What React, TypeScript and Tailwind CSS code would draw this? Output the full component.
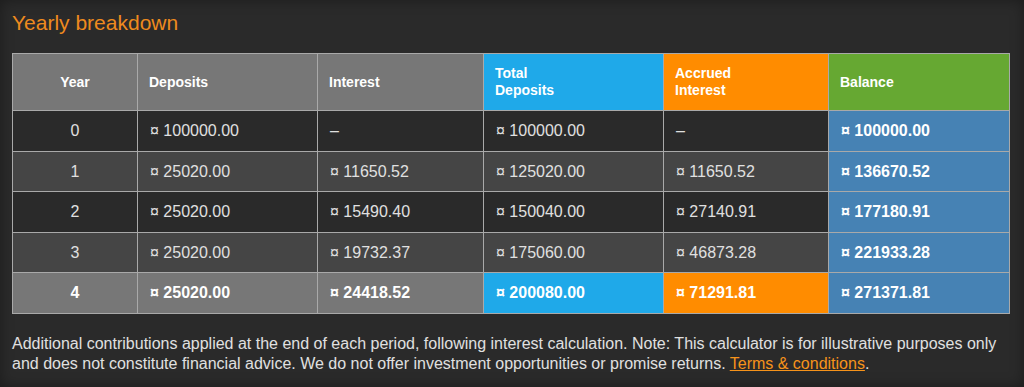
import React from "react";

type Row = {
  year: string;
  dep: string;
  int: string;
  tot: string;
  acc: string;
  bal: string;
};

const rows: Row[] = [
  { year: "0", dep: "¤ 100000.00", int: "–", tot: "¤ 100000.00", acc: "–", bal: "¤ 100000.00" },
  { year: "1", dep: "¤ 25020.00", int: "¤ 11650.52", tot: "¤ 125020.00", acc: "¤ 11650.52", bal: "¤ 136670.52" },
  { year: "2", dep: "¤ 25020.00", int: "¤ 15490.40", tot: "¤ 150040.00", acc: "¤ 27140.91", bal: "¤ 177180.91" },
  { year: "3", dep: "¤ 25020.00", int: "¤ 19732.37", tot: "¤ 175060.00", acc: "¤ 46873.28", bal: "¤ 221933.28" },
];

const last: Row = {
  year: "4",
  dep: "¤ 25020.00",
  int: "¤ 24418.52",
  tot: "¤ 200080.00",
  acc: "¤ 71291.81",
  bal: "¤ 271371.81",
};

const cellA = "border border-[#a9a9a9] px-[12px] h-[41px] align-middle";
const cellB = "border border-[#a9a9a9] px-[12px] h-[40px] align-middle";

export default function App() {
  return (
    <div
      className="min-h-[387px] w-[1024px] bg-[#2a2a2a] px-[12px] pt-[10px] pb-[10px] text-[#e0e0e0] shadow-[inset_0_0_14px_rgba(0,0,0,0.35)]"
      style={{ fontFamily: '"Liberation Sans", Arial, sans-serif' }}
    >
      <h2 className="text-[21px] leading-[25px] text-[#ee8a1e]">Yearly breakdown</h2>
      <table className="mt-[18px] w-[997px] table-fixed border-collapse border border-[#a9a9a9] text-[16px] leading-[18px]">
        <colgroup>
          <col className="w-[125px]" />
          <col className="w-[180px]" />
          <col className="w-[166px]" />
          <col className="w-[180px]" />
          <col className="w-[165px]" />
          <col className="w-[181px]" />
        </colgroup>
        <thead>
          <tr className="text-[14px] font-bold leading-[17px] text-white">
            <th className="h-[57px] border border-[#a9a9a9] bg-[#777777] px-[12px] text-center align-middle">Year</th>
            <th className="border border-[#a9a9a9] bg-[#777777] px-[11px] text-left align-middle">Deposits</th>
            <th className="border border-[#a9a9a9] bg-[#777777] px-[11px] text-left align-middle">Interest</th>
            <th className="border border-[#a9a9a9] bg-[#1fa9e9] px-[11px] text-left align-middle">
              Total
              <br />
              Deposits
            </th>
            <th className="border border-[#a9a9a9] bg-[#ff8c00] px-[11px] text-left align-middle">
              Accrued
              <br />
              Interest
            </th>
            <th className="border border-[#a9a9a9] bg-[#66a832] px-[11px] text-left align-middle">Balance</th>
          </tr>
        </thead>
        <tbody>
          {rows.map((r, i) => {
            const cell = i % 2 === 0 ? cellA : cellB;
            return (
              <tr key={r.year} className={i % 2 === 0 ? "bg-[#2a2a2a]" : "bg-[#454545]"}>
                <td className={`${cell} text-center`}>{r.year}</td>
                <td className={cell}>{r.dep}</td>
                <td className={cell}>{r.int}</td>
                <td className={cell}>{r.tot}</td>
                <td className={cell}>{r.acc}</td>
                <td className={`${cell} bg-[#4682b4] font-bold text-white`}>{r.bal}</td>
              </tr>
            );
          })}
          <tr className="bg-[#777777] font-bold text-white">
            <td className={`${cellA} text-center`}>{last.year}</td>
            <td className={cellA}>{last.dep}</td>
            <td className={cellA}>{last.int}</td>
            <td className={`${cellA} bg-[#1fa9e9]`}>{last.tot}</td>
            <td className={`${cellA} bg-[#ff8c00]`}>{last.acc}</td>
            <td className={`${cellA} bg-[#4682b4]`}>{last.bal}</td>
          </tr>
        </tbody>
      </table>
      <p className="mt-[20px] w-[1000px] text-[16px] leading-[20px] text-[#e0e0e0]">
        Additional contributions applied at the end of each period, following interest calculation. Note: This
        calculator is for illustrative purposes only and does not constitute financial advice. We do not offer
        investment opportunities or promise returns.{" "}
        <a href="#" className="text-[#f7931a] underline">
          Terms &amp; conditions
        </a>
        <span>.</span>
      </p>
    </div>
  );
}
